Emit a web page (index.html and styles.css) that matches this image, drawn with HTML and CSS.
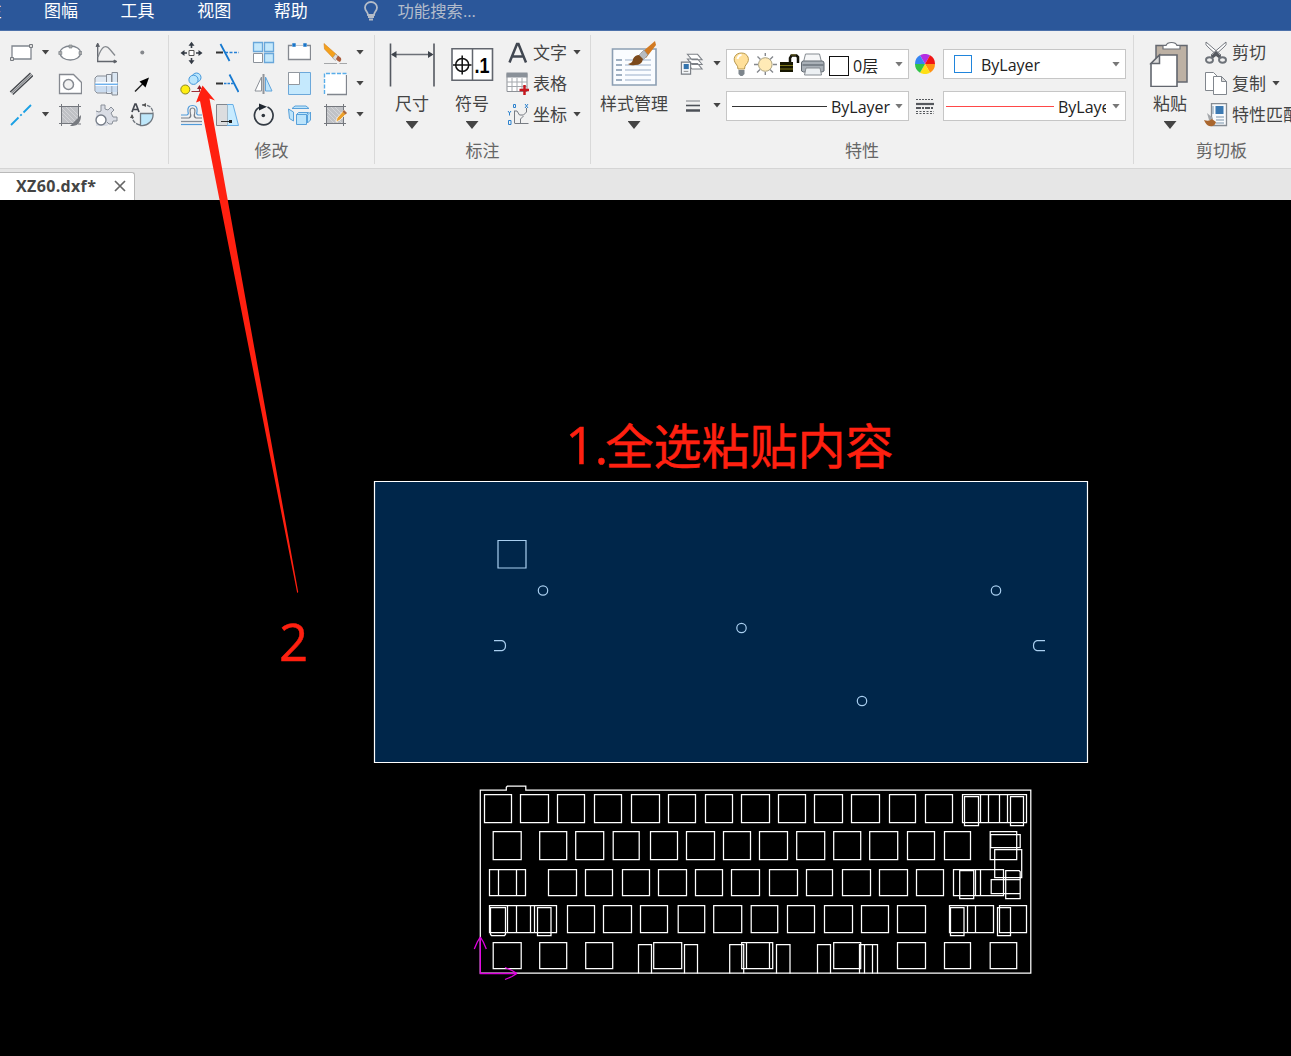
FILE: index.html
```html
<!DOCTYPE html>
<html lang="zh-CN">
<head>
<meta charset="utf-8">
<title>XZ60.dxf</title>
<link rel="stylesheet" href="styles.css">
</head>
<body>
<div class="app">
<nav class="menubar">
  <span class="menu-item">标注</span><span class="menu-item">图幅</span><span class="menu-item">工具</span><span class="menu-item">视图</span><span class="menu-item">帮助</span>
  <svg class="bulb" width="16" height="20" viewBox="0 0 16 20" fill="none" stroke="#b4bcc8" stroke-width="1.800"><path d="M5 14C5 11 2 10 2 6.500a6 5.500 0 0 1 12 0C14 10 11 11 11 14z"/><path d="M5 16h6M6 18.500h4"/></svg>
  <span class="search">功能搜索...</span>
</nav>

<section class="ribbon">
  <div class="group g-draw">
    <div class="grid grid-draw">
      <svg class="ic" viewBox="0 0 24 24"><path d="M3 5h19v13H3z" fill="#fff" stroke="#80868e" stroke-width="1.300"/><path d="M20.500 3.500h3v3h-3zM1.500 16.500h3v3h-3z" fill="#ddd" stroke="#777b80"/></svg>
      <i class="caret"></i>
      <svg class="ic" viewBox="0 0 24 24"><ellipse cx="12.300" cy="12" rx="10.300" ry="7" fill="#fff" stroke="#80868e" stroke-width="1.300"/><path d="M11 4h3v3h-3zM.8 10.500h3v3h-3zM21 10.500h3v3h-3z" fill="#aaa" stroke="#80868e" stroke-width=".7"/></svg>
      <svg class="ic" viewBox="0 0 24 24" stroke="#62666d"><path d="M3.700 20.500V4M3 20.500h18" stroke-width="1.300"/><path d="M4 16C8 5 12 3 16 8.500l5 6" stroke="#85898e" stroke-width="1.300"/><path d="M3.700 2L2 5.500h3.400zM23 20.500L20 19v3z" fill="#55585e"/></svg>
      <svg class="ic" viewBox="0 0 24 24"><circle cx="12.300" cy="11.500" r="2" fill="#85888c"/></svg>

      <svg class="ic" viewBox="0 0 24 24" stroke-width="1.400" stroke="#44474c"><path d="M1.200 20L21.500 1M3.800 22.500L24 3.500"/><path d="M2.500 21.300L22.800 2.300" stroke="#8b8e92"/></svg>
      <span></span>
      <svg class="ic" viewBox="0 0 24 24" stroke="#858990"><path d="M1.500 2.500h14l8 8v11h-22z" fill="#fff" stroke-width="1.300"/><circle cx="10.500" cy="12.500" r="5" fill="#f2f2f2" stroke-width="1.500"/></svg>
      <svg class="ic" viewBox="0 0 24 24" stroke="#858b94"><path d="M3 4h10v17H3l-2-2V6z" fill="#dfe8f2"/><path d="M12.500 2.500h5v19h-5z" fill="#e5edf5"/><path d="M18 .5h5.500v22.500H18z" fill="#dae6f2"/><path d="M1.500 14h22v6h-22z" fill="#bcd4ee" fill-opacity=".6" stroke="none"/><path d="M1.500 10h22v4h-22z" fill="#fff" stroke="none"/><path d="M1 12.300h23" stroke="#6eb1ed" stroke-width="1.500"/></svg>
      <svg class="ic" viewBox="0 0 24 24"><path d="M5 19.500l9-9" stroke="#222" stroke-width="1.500"/><path d="M19 5.500l-3.500 10-6-6z" fill="#000"/></svg>

      <svg class="ic" viewBox="0 0 24 24" stroke="#1ba0e4" stroke-width="1.800"><path d="M2 22l7.500-7.500M11.300 12.700l1.400-1.400M14.500 9.500L22 2"/></svg>
      <i class="caret"></i>
      <svg class="ic" viewBox="0 0 24 24"><path d="M4 3h16v18H4z" fill="#bfc1c5"/><path d="M4 5l15 15M4 9l11 11M4 13l8 8M8 4l12 12M12 4l8 8" stroke="#dcdde0" stroke-width=".7"/><path d="M1 3.500h22M1 20.500h15M3.500 1v22M20.500 1v14M20 21h3" stroke="#74777d"/><path d="M23 12L12 23q6 0 8-2 3-3 3-9z" fill="#777a80"/></svg>
      <svg class="ic" viewBox="0 0 24 24"><path d="M2 8l3 1 2-1V2h4v4l3 1 3-3 3 3-3 3 2 4h4v4h-4l-1 3h-3l-2 2H2z" fill="#dadde5"/><path d="M2 8l3 1 2-1V2h4v4l3 1 3-3 3 3-3 3 2 4h4v4h-4l-1 3h-3l-2-2" stroke="#8a9099"/><circle cx="7" cy="17" r="5" fill="#fff" stroke="#777e89" stroke-width="1.400"/></svg>
      <svg class="ic" viewBox="0 0 24 24"><path d="M10.500 10.500h12.500a11 11 0 0 1-12.500 12z" fill="#bee7fa" stroke="#70777f" stroke-width="1.300"/><path d="M12 2q10-1 11 8M10 22Q2 20 2 12" stroke="#70777f" stroke-width="1.300" stroke-dasharray="4 1"/><path d="M12 2l4-2v4zM2 11l-2 4h4z" fill="#555"/><path d="M2 9L5 1h1l3 8M3 6.500h5" stroke="#444850" stroke-width="1.700"/></svg>
    </div>
  </div>

  <div class="group g-modify">
    <div class="grid grid-modify">
      <svg class="ic" viewBox="0 0 24 24"><path d="M10 9.500h5v5h-5z" fill="#fff" stroke="#555"/><path d="M12.500 7V3M12.500 17v4M8 12H4M17 12h4" stroke="#333a44" stroke-width="1.600"/><path d="M12.500.8l3 4h-6zM12.500 23.200l3-4h-6zM1.500 12l4-3v6zM23.500 12l-4-3v6z" fill="#333a44"/></svg>
      <svg class="ic" viewBox="0 0 24 24"><path d="M1 11.500h7" stroke="#333" stroke-width="2"/><path d="M10 11.500h14" stroke="#2681d6" stroke-width="1.500" stroke-dasharray="3 1.500"/><path d="M5.500 3l9 17" stroke="#1679d0" stroke-width="1.800"/></svg>
      <svg class="ic" viewBox="0 0 24 24" fill="#c5e8fb" stroke="#69a7da"><path d="M2.500 1.500h9v9h-9zM13.500 1.500h9v9h-9zM13.500 12.500h9v9h-9z" stroke-width="1.300"/><path d="M2.500 12.500h9v9h-9z" fill="#fff" stroke="#8b929b"/></svg>
      <svg class="ic" viewBox="0 0 24 24"><path d="M5 4.500H1.500v14h22v-14H20" fill="#fff" stroke="#858990" stroke-width="1.300"/><path d="M9 4.500h7" stroke="#c5c8cc"/><path d="M5.300 2.300h3.400v3.400H5.300zM16.300 2.300h3.400v3.400h-3.400z" fill="#1975c9"/></svg>
      <svg class="ic" viewBox="0 0 24 24"><path d="M1 2.500L14 14l-3 4L1.500 8z" fill="#f4a11c" stroke="#d58017" stroke-width=".6"/><path d="M12.500 13l3 2.500-3 4-3-2.500z" fill="#ddd" stroke="#888" stroke-width=".5"/><path d="M15 14.500l3 2.500q1 2-1 4-2 0-4-3z" fill="#aa5c3b"/><path d="M1 22.500h13M16.500 22.500h8" stroke="#a5a7a9"/></svg>
      <i class="caret"></i>

      <svg class="ic" viewBox="0 0 24 24"><g fill="#b9e5fc" stroke="#4397da"><circle cx="17.500" cy="5.500" r="4.500"/><circle cx="14.500" cy="7.800" r="4.600"/></g><circle cx="6.300" cy="17.500" r="4.500" fill="#ffee12" stroke="#8a8525"/><path d="M12.500 19.500h8v-4" stroke="#9d3038" stroke-width="1.200"/><path d="M20.500 13l2.500 4h-5z" fill="#8a1f28"/></svg>
      <svg class="ic" viewBox="0 0 24 24"><path d="M1 11.500h7" stroke="#333" stroke-width="2"/><path d="M9 11.500h9" stroke="#2681d6" stroke-width="1.500" stroke-dasharray="2.500 1"/><path d="M14.500 2.500L23.500 20" stroke="#1679d0" stroke-width="1.800"/></svg>
      <svg class="ic" viewBox="0 0 24 24"><path d="M10.500 5v14H4z" fill="#fff" stroke="#8c9198"/><path d="M14.500 5v14H21z" fill="#bfe5fc" stroke="#61a5dc"/><path d="M12.500 2v20" stroke="#90949a" stroke-width="2"/></svg>
      <svg class="ic" viewBox="0 0 24 24"><path d="M1.500.5h22v22h-22z" fill="#c5e9fd" stroke="#6ca8da"/><path d="M1.500.5h11v12h-11z" fill="#fff" stroke="#92989f"/></svg>
      <svg class="ic" viewBox="0 0 24 24"><path d="M1.500 1.500h22v21h-22z" fill="#fff"/><path d="M23.500 3v19.500H4" stroke="#81868e" stroke-width="1.300"/><path d="M1.500 22V1.500h22" stroke="#58ade9" stroke-width="1.400" stroke-dasharray="4 1.500"/></svg>
      <i class="caret"></i>

      <svg class="ic" viewBox="0 0 24 24"><path d="M2 12h6q2-1 1-3-1-6.500 4.500-6.500T18 9q-1 2 1 3h4" stroke="#519bda" stroke-width="1.200"/><path d="M2 15h8q2.500-1 1.500-4-1.500-6 2-6t2 6q-1 3 1.500 4h6" stroke="#777d85" stroke-width="1.200"/><path d="M2 18.500h21" stroke="#888f98" stroke-width="1.300"/><path d="M2 21.500h21" stroke="#519bda" stroke-width="1.200"/></svg>
      <svg class="ic" viewBox="0 0 24 24"><path d="M1.500 1.500h11v21h-11z" fill="#dcdddf" stroke="#81868e"/><path d="M12.500 1h5.500l5.500 21.500h-11z" fill="#c7ebff"/><path d="M12 1.500h6l5.500 21H12" stroke="#68aee5"/><path d="M6 18.500h10" stroke="#333"/><path d="M14 17h3v3h-3z" fill="#222"/></svg>
      <svg class="ic" viewBox="0 0 24 24"><path d="M16.500 4A9.300 9.300 0 1 1 9 4" stroke="#343b44" stroke-width="1.700"/><path d="M8 .5v7l8-3.700z" fill="#202730"/><circle cx="12.300" cy="12.500" r="1.800" fill="#30363e"/></svg>
      <svg class="ic" viewBox="0 0 24 24" fill="#bce4fb" stroke="#59a1da"><path d="M5 5.500l3-2.500h11l3 2.500H9z"/><path d="M1.500 6l5 3v9l-4-2.500z"/><path d="M23.500 9l-3 3v8l3-3z"/><path d="M9.500 11.500h10v10h-10zM9.500 11.500l2-2h10l-2 2"/></svg>
      <svg class="ic" viewBox="0 0 24 24"><path d="M3.500 3.500h17v17h-17z" fill="#c0c2c6"/><path d="M4 5l15 15M4 9l11 11M4 13l8 8M8 4l12 12M12 4l8 8" stroke="#dcdde0" stroke-width=".7"/><path d="M1 3.500h22M1 20.500h22M3.500 1v22M20.500 1v22" stroke="#74777d"/><path d="M21 7l3 3-7 7-4 2 1-4z" fill="#eba12d" stroke="#fff" stroke-width=".7"/><path d="M21 7l3 3-1.500 1.500-3-3z" fill="#a76640"/></svg>
      <i class="caret"></i>
    </div>
    <div class="label">修改</div>
  </div>

  <div class="group g-annotate">
    <div class="row">
      <div class="big"><svg width="46" height="46" viewBox="0 0 46 46"><path d="M1.500 2.500v43M45 2.500v43" stroke="#555961" stroke-width="1.600"/><path d="M3 13.500h40" stroke="#6c7077" stroke-width="1.500"/><path d="M2 13.500l5.500-3.500v7zM44.500 13.500L39 10v7z" fill="#3f444c"/></svg><span>尺寸</span><i class="tri"></i></div>
      <div class="big"><svg width="46" height="46" viewBox="0 0 46 46"><path d="M3 7.700h40.500v31.500H3z" fill="#fff" stroke="#62666e" stroke-width="1.600"/><path d="M23.500 8v31" stroke="#62666e" stroke-width="1.500"/><g stroke="#111" stroke-width="1.500"><circle cx="13.200" cy="24" r="6.500"/><path d="M4 24h18.500M13.200 14.500v19"/></g><text x="25.500" y="31.500" class="sym" textLength="15" lengthAdjust="spacingAndGlyphs">.1</text></svg><span>符号</span><i class="tri"></i></div>
      <div class="list">
        <div class="item"><svg class="ic" viewBox="0 0 24 24"><path d="M4.500 21.500L12 3h1.500L21 21.500M7.300 15.500h11" stroke="#414751" stroke-width="2.500"/></svg><span>文字</span><i class="caret"></i></div>
        <div class="item"><svg class="ic" viewBox="0 0 24 24"><path d="M2 1.500h20v18H2z" fill="#fff" stroke="#8d9197"/><path d="M1.500.5h21v5h-21z" fill="#8a9199"/><path d="M2 10h20M2 14.500h20M7 6v13M12 6v13M17 6v13" stroke="#a5a9ae"/><path d="M19.500 13v10M14.500 18h10" stroke="#c6171e" stroke-width="2.500"/></svg><span>表格</span></div>
        <div class="item"><svg class="ic" viewBox="0 0 24 24"><path d="M9.500 20V8M9.500 20.500h14M9 8h3l2.500 4h4l3-3V5M15.500 20v-4l3-3" stroke="#777b82"/><g stroke="#2c82ce"><path d="M8.500 1.500h2v3h-2zM20 1l3 4M23 1l-3 4M3 8l1.500 2L6 8M4.500 10v2.500M3.500 17.500h2.500v4H3.500z"/></g></svg><span>坐标</span><i class="caret"></i></div>
      </div>
    </div>
    <div class="label">标注</div>
  </div>

  <div class="group g-props">
    <div class="row">
      <div class="big wide"><svg width="48" height="46" viewBox="0 0 48 46"><path d="M2.500 8h43.500v36H2.500z" fill="#fafcff" stroke="#8c9eb3" stroke-width="1.600"/><path d="M6 19h6M6 24h6M6 29h6M6 34h6M6 39h6" stroke="#8397ae" stroke-width="1.500"/><path d="M15 19h26M15 24h26M15 29h26M15 34h26M15 39h26" stroke="#bbc8dc" stroke-width="1.500"/><path d="M45 0l-14 12 5 5L46 4z" fill="#d27a22"/><path d="M34 9l-5 5 4 5 5-5z" fill="#b8bcc1" stroke="#7e838a" stroke-width=".5"/><path d="M29 14l4 4q-1 6-8 6-4 1-7-1 5-1 5-5 2-4 6-4z" fill="#7c4a1d"/></svg><span>样式管理</span><i class="tri"></i></div>
      <div class="props">
        <svg class="ic" viewBox="0 0 26 26"><g fill="#fff" stroke="#7d8187" stroke-width="1.100"><path d="M8 12.500h11l5 6H13zM8 7.500h11l5 6H13zM8 2.500h11l5 6H13z"/></g><path d="M1.500 11h10v13h-10z" fill="#f3f6f9" stroke="#777c83" stroke-width="1.200"/><path d="M4 13h5.500v5.500H4z" fill="#3474ae"/><path d="M4 21h5" stroke="#888"/></svg>
        <i class="caret"></i>
        <div class="combo layer">
          <svg width="100" height="28" viewBox="0 0 100 28"><path d="M11 19q0-3-2-5c-4-5-1-11 5.500-11s9 7 5 11q-2 2-2 5z" fill="#ffe09a" stroke="#b7984e"/><path d="M10.500 9q1-4 4-4" stroke="#fff" stroke-width="2"/><path d="M11.500 20h6v4l-2 2h-2l-2-2z" fill="#7d858c"/><g stroke="#85888d" stroke-width="1.400"><path d="M38.300 3v3M38.300 22v3M27 14.500h4M46 14.500h4M30.500 6.500l3 3M43 19.500l3 3M46 6.500l-3 3M33 19.500l-3 3"/></g><circle cx="38.300" cy="14.500" r="6.800" fill="#ffeab6" stroke="#aaa281"/><path d="M53 12h13v10H53z" fill="#161600"/><path d="M53 15.500h13M53 19h13" stroke="#7a7316"/><path d="M63 12V8l1.500-2.500h5L71 7v6" stroke="#15150a" stroke-width="2.500"/><path d="M64 5h5" stroke="#827922" stroke-width=".8"/><path d="M78.500 4h14l2 8h-18z" fill="#f5f6f7" stroke="#858b91"/><path d="M74.500 13q0-2 2-2h18.500q2 0 2 2v8l-2 1H76.500l-2-1z" fill="#a9b0b7" stroke="#606870"/><path d="M75.500 15h21" stroke="#6c747c" stroke-width="1.500"/><path d="M79 18h14l1.500 7H77.500z" fill="#ecf0f3" stroke="#858b91"/></svg>
          <b class="swatch"></b><span class="txt">0层</span><i class="caret dim"></i>
        </div>
        <svg class="wheel" width="20" height="20" viewBox="-10 -10 20 20"><path d="M0 0L-5-8.660A10 10 0 0 1 5-8.660z" fill="#b42ee2"/><path d="M0 0L5-8.660A10 10 0 0 1 10 0z" fill="#f01515"/><path d="M0 0H10A10 10 0 0 1 5 8.660z" fill="#ff9212"/><path d="M0 0L5 8.660A10 10 0 0 1-5 8.660z" fill="#ffdf15"/><path d="M0 0L-5 8.660A10 10 0 0 1-10 0z" fill="#31c348"/><path d="M0 0H-10A10 10 0 0 1-5-8.660z" fill="#3484f2"/></svg>
        <div class="combo color"><b class="swatch blue"></b><span class="txt">ByLayer</span><i class="caret dim"></i></div>

        <svg class="ic" viewBox="0 0 24 24" stroke="#4c5057"><path d="M6 7h14" stroke="#a2a5a9" stroke-width="1.500"/><path d="M6 11.500h14" stroke-width="1.600"/><path d="M6 16.500h14" stroke-width="2.500"/></svg>
        <i class="caret"></i>
        <div class="combo width"><b class="line"></b><span class="txt">ByLayer</span><i class="caret dim"></i></div>
        <svg class="wheel" width="20" height="20" viewBox="0 0 20 20" stroke="#55585d"><path d="M1 3.500h18" stroke-dasharray="2 1"/><path d="M1 8h18" stroke-width="2.200"/><path d="M1 12h18" stroke-width="2" stroke-dasharray="5 1 2 1"/><path d="M1 15.500h18M1 17.500h18" stroke-dasharray="2 1.500"/></svg>
        <div class="combo type"><b class="line red"></b><span class="txt cut">ByLayer</span><i class="caret dim"></i></div>
      </div>
    </div>
    <div class="label">特性</div>
  </div>

  <div class="group g-clip">
    <div class="row">
      <div class="big"><svg width="42" height="46" viewBox="0 0 42 46"><path d="M7 4.500h31v36.500H7z" fill="#bdb1a4" stroke="#646870" stroke-width="1.500"/><path d="M14 8V4.500h3Q18 1.500 22.500 1.500T28 4.500h3V8z" fill="#fff" stroke="#6c7077" stroke-width="1.200"/><path d="M10.500 14H28v31.500H2V22.500z" fill="#fff" stroke="#62666e" stroke-width="1.600"/><path d="M10.500 14v8.500H2z" fill="#ddd" stroke="#62666e" stroke-width="1.500"/></svg><span>粘贴</span><i class="tri"></i></div>
      <div class="list">
        <div class="item"><svg class="ic" viewBox="0 0 24 24"><path d="M2 1q-1 3 2 5l11 10 2-2zM22 1q1 3-2 5L9 16l-2-2z" fill="#fff" stroke="#74787f"/><path d="M7 15l5-5 5 5-1 3-4-3-4 3z" fill="#555960"/><g stroke="#6d7279" stroke-width="1.900"><ellipse cx="5.500" cy="19" rx="3.500" ry="2.700"/><ellipse cx="18.500" cy="19" rx="3.500" ry="2.700"/></g></svg><span>剪切</span></div>
        <div class="item"><svg class="ic" viewBox="0 0 24 24" fill="#fff" stroke="#81868d"><path d="M1.500.5h8l4 4v14h-12z"/><path d="M9.500 4.500h8l5 5v13h-13z"/><path d="M17.500 4.500v5h5z" fill="#ddd"/></svg><span>复制</span><i class="caret"></i></div>
        <div class="item"><svg class="ic" viewBox="0 0 24 24"><path d="M7.500.5h15v22h-15z" fill="#f8fafc" stroke="#858b92" stroke-width="1.300"/><path d="M11.500 3h8v8h-8z" fill="#3b79b2"/><path d="M9 3v8M12 14h8M12 17h8M12 20h8" stroke="#7993aa"/><path d="M3 10l6 5-1 3-3-1z" fill="#a4a7aa"/><path d="M0 17q5 2 8-1l4 3q-1 5-7 4-3-1-5-6z" fill="#a9662e"/></svg><span>特性匹配</span></div>
      </div>
    </div>
    <div class="label">剪切板</div>
  </div>
</section>

<div class="tabs"><div class="tab"><span>XZ60.dxf*</span><svg width="12" height="12" viewBox="0 0 12 12"><path d="M1 1l10 10M11 1L1 11" stroke="#666" stroke-width="1.700"/></svg></div></div>

<main class="canvas">
<svg width="1291" height="856" viewBox="0 200 1291 856">
  <path d="M374.500 481.500h713v281h-713z" fill="#00264a" stroke="#fff" stroke-width="1.200"/>
  <g class="selected">
    <path d="M498 540.500h28v27.500h-28z"/>
    <circle cx="543" cy="590.500" r="4.700"/><circle cx="996" cy="590.500" r="4.700"/><circle cx="741.500" cy="628" r="4.700"/><circle cx="862" cy="701" r="4.700"/>
    <path d="M494 640.700h8q3.500 1 3.500 5t-3.500 5h-8M1045 640.700h-8q-3.500 1-3.500 5t3.500 5h8"/>
  </g>
  <g class="plate">
    <path d="M480.300 790.200h26v-3l1-1h18.500v4h505v183h-550.500z"/>
    <path d="M484.500 794.500h27v28h-27zM520.500 794.500h28v28h-28zM557.500 794.500h27v28h-27zM594.500 794.500h27v28h-27zM631.500 794.500h28v28h-28zM668.500 794.500h27v28h-27zM705.500 794.500h27v28h-27zM741.500 794.500h28v28h-28zM778.500 794.500h27v28h-27zM814.500 794.500h28v28h-28zM851.500 794.500h28v28h-28zM889.500 794.500h26v28h-26zM925.500 794.500h27v28h-27z"/>
    <path d="M962.500 794.500h64v28h-64zM980.500 794.500v28M988.500 794.500v28M999.500 794.500v28M1007.500 794.500v28M964.500 796.500h14v29h-14zM1010.500 796.500h13v29h-13z"/>
    <path d="M493.200 831.700h28v28h-28zM539.700 831.700h27v28h-27zM575.700 831.700h28v28h-28zM613.200 831.700h26v28h-26zM650.500 831.700h27v28h-27zM686.500 831.700h28v28h-28zM723.500 831.700h27v28h-27zM759.500 831.700h28v28h-28zM796.700 831.700h28v28h-28zM833.700 831.700h27v28h-27zM869.700 831.700h28v28h-28zM907.500 831.700h27v28h-27zM944.500 831.700h26v28h-26zM990.200 831.700h26.500v28h-26.500z"/>
    <path d="M990.700 834.500h29.500v13h-29.500zM994.700 849.700h27v28h-27zM1005.700 870.700h13.500l1 1v27h-14.500v-27zM991.200 879.700h29v14h-29z"/>
    <path d="M489.500 869.500h36v26h-36zM498.500 869.500v26M516.500 869.500v26M548.500 869.500h28v26h-28zM585.500 869.500h27v26h-27zM622.500 869.500h27v26h-27zM658.500 869.500h28v26h-28zM695.500 869.500h27v26h-27zM731.500 869.500h28v26h-28zM769.500 869.500h28v26h-28zM806.500 869.500h26v26h-26zM842.500 869.500h28v26h-28zM879.500 869.500h28v26h-28zM916.500 869.500h27v26h-27zM953.500 869.500h50v26h-50zM975.500 869.500v26M980.500 869.500v26M959.700 870.500h14v28h-14z"/>
    <path d="M489.500 905.500h67v27h-67zM507.500 905.500v27M516.500 905.500v27M530.500 905.500v27M534.500 905.500v27M490.500 907.500h15v27l-1 1h-13l-1-1zM537.500 907.500h13.500v28h-13.500zM567.500 905.500h27v27h-27zM603.500 905.500h28v27h-28zM640.500 905.500h27v27h-27zM678.200 905.500h26.500v27h-26.500zM713.700 905.500h28v27h-28zM751.200 905.500h26.500v27h-26.500zM787.500 905.500h27v27h-27zM824.500 905.500h28v27h-28zM861.500 905.500h27v27h-27zM897.500 905.500h28v27h-28z"/>
    <path d="M949.500 905.500h44v27h-44zM967.500 905.500v27M975.500 905.500v27M950.500 907.500h13.500v28h-13.500zM997.500 907.500h13v28h-13zM999.500 905.500h27v27h-27z"/>
    <path d="M493.200 942.500h28v26h-28zM539.700 942.500h27v26h-27zM585.700 942.500h27v26h-27zM653.700 942.500h28v26h-28zM741.700 942.500h31v26h-31zM746.500 942.500v26M769.500 942.500v26M833.700 942.500h27v26h-27zM897.500 942.500h28v26h-28zM944.500 942.500h26v26h-26zM990.200 942.500h26.500v26h-26.500z"/>
    <path d="M638.500 973.500v-29h13v29M684.500 973.500v-29h13v29M729.700 973.500v-29h14v29M776.500 973.500v-29h13.500v29M817.500 973.500v-29h13v29M859.500 973.500v-29h18v29M864.500 944.500v29M872.500 944.500v29"/>
  </g>
  <path class="ucs" d="M480.300 937v36.500H517M480.300 937l-3 5-3 7M480.300 937l3 5 3 7M517 973.500l-5-3-7-3M517 973.500l-5 3-7 3"/>
  <path d="M202.500 85.500L196 102.500 200 101 297.200 593 298.200 592 209.500 98.500 215 100.500z" fill="#ff2010"/>
  <text class="note" y="464"><tspan class="digit" x="565.500">1.</tspan><tspan x="605.500">全选粘贴内容</tspan></text>
  <text class="note digit" x="279" y="661.300">2</text>
</svg>
</main>
</div>
</body>
</html>
```
FILE: styles.css
```css
* { box-sizing: border-box; }
body { margin: 0; background: #000; font-family: "Open Sans", "Noto Sans CJK SC", sans-serif; font-size: 17px; color: #444; }
.app { width: 1291px; height: 1056px; overflow: hidden; display: flex; flex-direction: column; }
svg { display: block; flex: none; }
span { white-space: nowrap; }

.menubar { height: 31px; flex: none; background: #2b579a; border-bottom: 1px solid #4c71aa; display: flex; padding-left: 44px; color: #fff; line-height: 22px; }
.menu-item { width: 34px; margin-right: 42.600px; flex: none; }
.menu-item:first-child { margin-left: -76.600px; }
.bulb { margin: 1px 0 0 13px; }
.search { margin-left: 18px; font-size: 16.400px; color: #b3bccb; }

.ribbon { height: 137px; flex: none; display: flex; padding-top: 4px; background: #f1f1f1; fill: none; }
.group { height: 129px; flex: none; padding-top: 6px; border-right: 1px solid #d9d9d9; display: flex; flex-direction: column; }
.g-draw { width: 169px; padding-left: 9px; }
.g-modify { width: 206px; }
.g-annotate { width: 216px; }
.g-props { width: 543px; }
.g-clip { width: 176px; }
.grid { display: grid; grid-auto-rows: 24px; row-gap: 7px; align-items: center; justify-items: center; }
.grid-draw { grid-template-columns: 24px 25px 24px 48px 24px; }
.grid-modify { grid-template-columns: repeat(5, 36px) 14px; padding-left: 4px; }
.label { margin-top: auto; height: 24px; line-height: 22px; text-align: center; color: #666; }
.ic { width: 24px; height: 24px; }
.row { display: flex; height: 93px; }
.g-annotate .row { padding-left: 7px; }
.g-props .row { padding-left: 8px; }
.g-clip .row { padding-left: 6px; }
.big { width: 60px; display: flex; flex-direction: column; align-items: center; }
.big.wide { width: 70px; }
.big span { margin-top: 6px; line-height: 22px; }
.list { display: flex; flex-direction: column; gap: 7px; margin-left: 3px; }
.g-clip .list { margin-left: 4px; }
.item { display: flex; align-items: center; height: 24px; line-height: 24px; }
.item span { margin-left: 4px; }
.item .caret { margin-left: 6px; }
.sym { font: bold 22px "Liberation Sans", sans-serif; fill: #000; }

.caret { width: 8px; height: 5px; margin-bottom: 2px; background: #444; clip-path: polygon(0 0, 100% 0, 50% 100%); flex: none; }
.caret.dim { background: #777; margin-bottom: 0; }
.tri { width: 13px; height: 8px; margin-top: 6px; background: #444; clip-path: polygon(0 0, 100% 0, 50% 100%); flex: none; }

.props { display: grid; grid-template-columns: 28px 18px 183px 34px 183px; grid-auto-rows: 30px; row-gap: 12px; margin: 8px 0 0 11px; align-items: center; }
.props > .caret { justify-self: center; }
.wheel { margin-left: 6px; }
.combo { height: 30px; border: 1px solid #c6c6c6; background: #fff; display: flex; align-items: center; padding-right: 5px; color: #222; }
.combo .caret { margin-left: auto; }
.swatch { width: 20px; height: 20px; border: 1px solid #111; margin: 4px 0 0 2px; flex: none; }
.swatch.blue { border-color: #2085dc; width: 18px; height: 18px; margin: 0 0 0 10px; }
.txt { margin-left: 4px; font-size: 16px; padding-top: 1px; }
.color .txt { margin-left: 9px; }
.line { width: 95px; height: 1px; margin-left: 5px; background: #333; flex: none; }
.width .txt { margin-left: 4px; }
.line.red { width: 108px; margin-left: 2px; background: #ff4848; }
.txt.cut { width: 48px; overflow: hidden; margin-left: 4px; }

.tabs { height: 32px; flex: none; padding-top: 3px; background: #e6e6e6; border-top: 1px solid #d5d5d5; display: flex; }
.tab { width: 135px; height: 28px; background: #fff; border: 1px solid #b9b9b9; border-width: 1px 1px 0 0; border-radius: 0 3px 0 0; display: flex; align-items: center; justify-content: space-between; padding: 0 8px 1px 16px; font-size: 16px; letter-spacing: .35px; font-weight: 700; }

.canvas { flex: none; height: 856px; background: #000; }
.canvas svg { overflow: visible; position: relative; }
.selected { fill: none; stroke: #a9cff0; stroke-width: 1.200; }
.plate { fill: none; stroke: #fff; stroke-width: 1.250; }
.ucs { fill: none; stroke: #e000e0; stroke-width: 1.300; }
.note { font-family: "Noto Sans CJK SC", sans-serif; font-size: 48px; fill: #ff2010; stroke: #ff2010; stroke-width: .500px; }
.digit { font-family: "Open Sans", sans-serif; font-size: 51px; }
```
